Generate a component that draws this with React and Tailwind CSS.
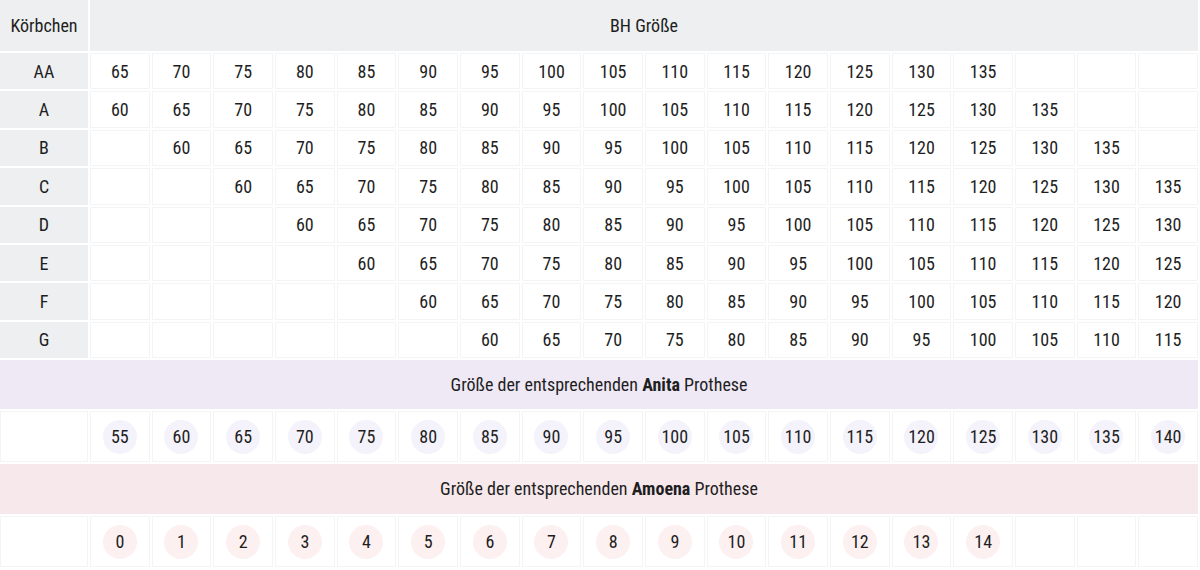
const ROWS = ['AA', 'A', 'B', 'C', 'D', 'E', 'F', 'G'];
const COLS = Array.from({ length: 18 }, (_, i) => i + 1);

function sizeFor(r, c) {
  const v = 60 + 5 * (c - r);
  return v >= 60 && v <= 135 ? v : '';
}

function DataCell({ children }) {
  return (
    <div className="flex items-center justify-center border border-[#f4f4f4] bg-white">
      {children}
    </div>
  );
}

function Circle({ value, tone }) {
  return (
    <div
      className={
        tone === 'anita'
          ? 'flex h-[34px] w-[34px] items-center justify-center rounded-full bg-[#f4f2fa]'
          : 'flex h-[34px] w-[34px] items-center justify-center rounded-full bg-[#fcf0f1]'
      }
    >
      {value}
    </div>
  );
}

export default function App() {
  const anita = COLS.map((c) => 50 + 5 * c);
  const amoena = COLS.map((c) => (c <= 15 ? c - 1 : null));
  return (
    <div className="w-[1200px] bg-white pr-[2px] font-['Roboto_Condensed',sans-serif] text-[18px] leading-none text-[#1e1e1e]">
      <div className="grid grid-cols-[88px_repeat(18,minmax(0,1fr))] gap-[2px]">
        {/* header */}
        <div className="flex h-[51px] items-center justify-center bg-[#edeff1] pt-[1px]">Körbchen</div>
        <div className="col-span-18 flex h-[51px] items-center justify-center bg-[#edeff1] pt-[1px]">BH Größe</div>

        {ROWS.map((label, r) => (
          <div key={label} className="contents">
            <div className="flex h-[36.4px] items-center justify-center bg-[#edeff1] pt-[1px]">{label}</div>
            {COLS.map((c) => (
              <DataCell key={c}>
                <span className="pt-[1px]">{sizeFor(r, c)}</span>
              </DataCell>
            ))}
          </div>
        ))}

        {/* Anita */}
        <div className="col-span-19 flex h-[49px] items-center justify-center bg-[#efe8f5]">
          <span>
            Größe der entsprechenden <span className="font-bold">Anita</span> Prothese
          </span>
        </div>
        <div className="h-[51px] border border-[#f4f4f4] bg-white" />
        {anita.map((v, i) => (
          <DataCell key={i}>
            <Circle value={v} tone="anita" />
          </DataCell>
        ))}

        {/* Amoena */}
        <div className="col-span-19 flex h-[50px] items-center justify-center bg-[#f7e8ec]">
          <span>
            Größe der entsprechenden <span className="font-bold">Amoena</span> Prothese
          </span>
        </div>
        <div className="h-[51px] border border-[#f4f4f4] bg-white" />
        {amoena.map((v, i) => (
          <DataCell key={i}>{v !== null && <Circle value={v} tone="amoena" />}</DataCell>
        ))}
      </div>
    </div>
  );
}
